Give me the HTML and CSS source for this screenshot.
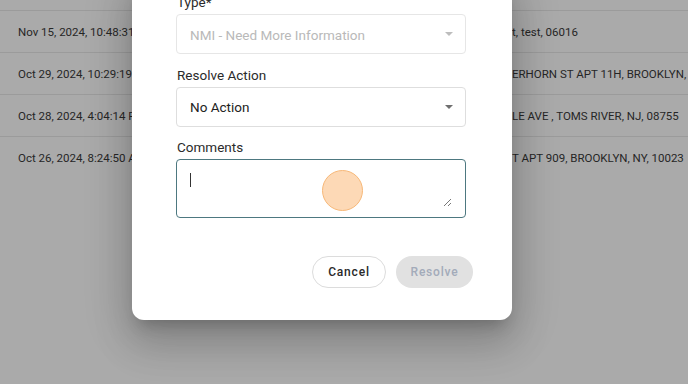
FILE: index.html
```html
<!DOCTYPE html>
<html>
<head>
<meta charset="utf-8">
<link rel="stylesheet" href="styles.css">
</head>
<body>
<div class="page">
  <div class="table">
    <div class="row top"><div class="c-date"></div><div class="c-addr"></div></div>
    <div class="row"><div class="c-date">Nov 15, 2024, 10:48:31 AM</div><div class="c-addr">t, test, 06016</div></div>
    <div class="row"><div class="c-date">Oct 29, 2024, 10:29:19 AM</div><div class="c-addr">ERHORN ST APT 11H, BROOKLYN, NY</div></div>
    <div class="row"><div class="c-date">Oct 28, 2024, 4:04:14 PM</div><div class="c-addr">LE AVE , TOMS RIVER, NJ, 08755</div></div>
    <div class="row last"><div class="c-date">Oct 26, 2024, 8:24:50 AM</div><div class="c-addr">T APT 909, BROOKLYN, NY, 10023</div></div>
  </div>
</div>

<div class="dialog">
  <div class="field">
    <label class="label">Type*</label>
    <div class="select disabled">
      <span class="value">NMI - Need More Information</span>
      <span class="caret"></span>
    </div>
  </div>
  <div class="field">
    <label class="label">Resolve Action</label>
    <div class="select">
      <span class="value">No Action</span>
      <span class="caret"></span>
    </div>
  </div>
  <div class="field">
    <label class="label">Comments</label>
    <div class="textarea">
      <span class="cursor"></span>
      <svg class="grip" width="9" height="9" viewBox="0 0 9 9"><path d="M8 1 L1 8 M8 5 L5 8" stroke="#777" stroke-width="1" fill="none"/></svg>
    </div>
  </div>
  <div class="actions">
    <button class="btn cancel">Cancel</button>
    <button class="btn resolve">Resolve</button>
  </div>
</div>

<div class="touch"></div>
</body>
</html>
```

FILE: styles.css
```css
html, body {
  margin: 0;
  padding: 0;
  width: 688px;
  height: 384px;
  overflow: hidden;
  background: #aaaaaa;
  font-family: Roboto, "Liberation Sans", sans-serif;
}

.page {
  width: 688px;
  height: 384px;
  overflow: hidden;
}

.table {
  display: flex;
  flex-direction: column;
}

.row {
  display: flex;
  align-items: center;
  height: 41px;
  border-bottom: 1px solid #9b9b9b;
  font-size: 11.5px;
  color: #262626;
  white-space: nowrap;
}

.row.top {
  height: 10px;
}

.row.last {
  border-bottom: none;
}

.c-date {
  width: 494px;
  padding-left: 18px;
  flex: none;
}

.dialog {
  position: absolute;
  left: 132px;
  top: -26px;
  width: 380px;
  box-sizing: border-box;
  padding: 20px 39px 32px 44px;
  background: #fff;
  border-radius: 12px;
  box-shadow: 0 11px 15px -7px rgba(0,0,0,.2), 0 24px 38px 3px rgba(0,0,0,.14), 0 9px 46px 8px rgba(0,0,0,.12);
  display: flex;
  flex-direction: column;
  gap: 12.5px;
}

.field {
  display: flex;
  flex-direction: column;
  gap: 3px;
  width: 290px;
}

.label {
  font-size: 13.5px;
  line-height: 17px;
  color: #2b2b2b;
  padding-left: 1px;
}

.select {
  height: 40px;
  box-sizing: border-box;
  border: 1px solid #dedede;
  border-radius: 4px;
  display: flex;
  align-items: center;
  justify-content: space-between;
  padding: 0 12px 0 13px;
}

.select .value {
  font-size: 13.5px;
  color: #222;
  padding-top: 1px;
}

.select.disabled {
  border-color: #e6e6e6;
}

.select.disabled .value {
  color: #b9b9b9;
}

.caret {
  width: 0;
  height: 0;
  border-left: 4.5px solid transparent;
  border-right: 4.5px solid transparent;
  border-top: 4.5px solid #6f6f6f;
}

.select.disabled .caret {
  border-top-color: #bdbdbd;
}

.textarea {
  position: relative;
  height: 59px;
  box-sizing: border-box;
  border: 1px solid #4d7880;
  border-radius: 4px;
}

.cursor {
  position: absolute;
  left: 13px;
  top: 13px;
  width: 1px;
  height: 14px;
  background: #333;
}

.grip {
  position: absolute;
  right: 13px;
  bottom: 10px;
}

.actions {
  margin-top: 25px;
  display: flex;
  justify-content: flex-end;
  gap: 10px;
}

.btn {
  height: 32px;
  border-radius: 16px;
  font-family: Roboto, "Liberation Sans", sans-serif;
  font-size: 12px;
  font-weight: 500;
  letter-spacing: 0.8px;
  padding: 0;
  cursor: pointer;
}

.cancel {
  width: 74px;
  background: #fff;
  border: 1px solid #dcdcdc;
  color: #2a2a2a;
}

.resolve {
  width: 77px;
  background: #e1e1e1;
  border: none;
  color: #a3abba;
}

.touch {
  position: absolute;
  left: 322px;
  top: 170px;
  width: 39px;
  height: 39px;
  border-radius: 50%;
  background: #fdd9b6;
  border: 1.5px solid #f7b878;
}
```
